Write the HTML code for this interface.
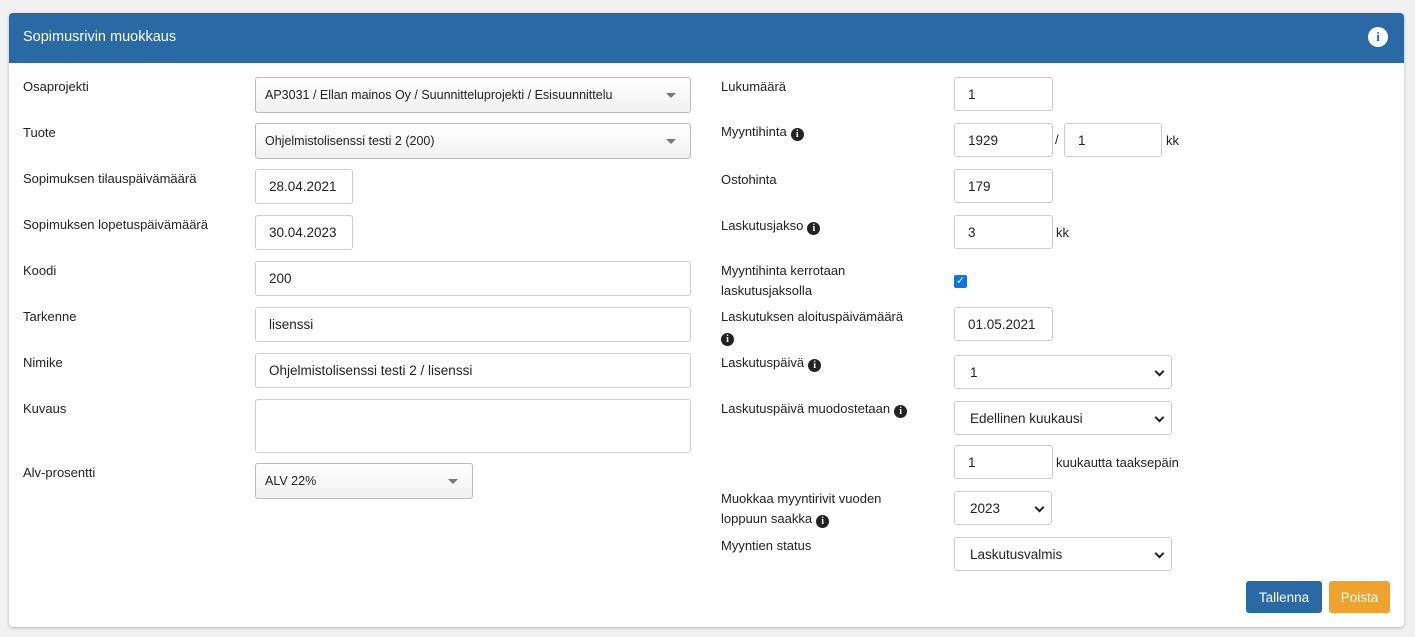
<!DOCTYPE html>
<html><head><meta charset="utf-8"><style>
*{box-sizing:border-box;margin:0;padding:0}
body{width:1415px;height:637px;background:#f1f1f1;font-family:"Liberation Sans",sans-serif;font-size:13px;color:#222;position:relative;overflow:hidden}
.panel{position:absolute;left:9px;top:13px;width:1395px;height:614px;background:#fff;border-radius:4px;box-shadow:0 1px 3px rgba(0,0,0,.25)}
.hdr{position:absolute;left:9px;top:13px;width:1395px;height:50px;background:#2a69a6;border-radius:4px 4px 0 0;color:#fff;font-size:14.5px;padding:16px 0 0 14px}
.ii{position:absolute;left:1368px;top:27px;width:20px;height:20px;border-radius:50%;background:#fff;color:#2a69a6;font:bold 13px "Liberation Serif",serif;text-align:center;line-height:20px}
.l{position:absolute;font-size:13px;line-height:20px}
.in{position:absolute;border:1px solid #ccc;border-radius:3px;background:#fff;padding-left:13px;font-size:13.5px;display:flex;align-items:center}
.sel2{background:linear-gradient(#fff,#f1f1f1);border-color:#bbb;padding-left:9px;font-size:12.5px}
.sel2:after{content:"";position:absolute;right:14px;top:15px;border:5px solid transparent;border-top:5px solid #777;border-bottom:0}
.sel{padding-left:15px}
.sel:after{content:"";position:absolute;right:8px;top:12px;width:5px;height:5px;border-right:2px solid #222;border-bottom:2px solid #222;transform:rotate(45deg)}
.i{display:inline-block;width:13px;height:13px;border-radius:50%;background:#222;color:#fff;font:bold 10px "Liberation Serif",serif;text-align:center;line-height:13px;vertical-align:-1px;margin-left:4px}
.btn{position:absolute;top:581px;height:32px;border-radius:3px;color:#fff;font-size:13.5px;display:flex;align-items:center;justify-content:center}
</style></head><body>
<div class="panel"></div>
<div class="hdr">Sopimusrivin muokkaus</div>
<div class="ii">i</div>

<div class="l" style="left:23px;top:77px">Osaprojekti</div>
<div class="in sel2" style="left:255px;top:77px;width:436px;height:36px">AP3031 / Ellan mainos Oy / Suunnitteluprojekti / Esisuunnittelu</div>
<div class="l" style="left:23px;top:123px">Tuote</div>
<div class="in sel2" style="left:255px;top:123px;width:436px;height:36px">Ohjelmistolisenssi testi 2 (200)</div>
<div class="l" style="left:23px;top:169px">Sopimuksen tilauspäivämäärä</div>
<div class="in" style="left:255px;top:169px;width:98px;height:35px">28.04.2021</div>
<div class="l" style="left:23px;top:215px">Sopimuksen lopetuspäivämäärä</div>
<div class="in" style="left:255px;top:215px;width:98px;height:35px">30.04.2023</div>
<div class="l" style="left:23px;top:261px">Koodi</div>
<div class="in" style="left:255px;top:261px;width:436px;height:35px">200</div>
<div class="l" style="left:23px;top:307px">Tarkenne</div>
<div class="in" style="left:255px;top:307px;width:436px;height:35px">lisenssi</div>
<div class="l" style="left:23px;top:353px">Nimike</div>
<div class="in" style="left:255px;top:353px;width:436px;height:35px">Ohjelmistolisenssi testi 2 / lisenssi</div>
<div class="l" style="left:23px;top:399px">Kuvaus</div>
<div class="in" style="left:255px;top:399px;width:436px;height:54px"></div>
<div class="l" style="left:23px;top:463px">Alv-prosentti</div>
<div class="in sel2" style="left:255px;top:463px;width:218px;height:36px">ALV 22%</div>

<div class="l" style="left:721px;top:77px">Lukumäärä</div>
<div class="in" style="left:954px;top:77px;width:99px;height:34px">1</div>
<div class="l" style="left:721px;top:122px">Myyntihinta<span class="i">i</span></div>
<div class="in" style="left:954px;top:123px;width:99px;height:34px">1929</div>
<div class="l" style="left:1055px;top:130px">/</div>
<div class="in" style="left:1064px;top:123px;width:98px;height:34px">1</div>
<div class="l" style="left:1166px;top:131px">kk</div>
<div class="l" style="left:721px;top:170px">Ostohinta</div>
<div class="in" style="left:954px;top:169px;width:99px;height:34px">179</div>
<div class="l" style="left:721px;top:216px">Laskutusjakso<span class="i">i</span></div>
<div class="in" style="left:954px;top:215px;width:99px;height:34px">3</div>
<div class="l" style="left:1056px;top:223px">kk</div>
<div class="l" style="left:721px;top:261px">Myyntihinta kerrotaan<br>laskutusjaksolla</div>
<div style="position:absolute;left:954px;top:275px;width:13px;height:13px;background:#0b75e8;border-radius:2px;color:#fff;font-size:11px;line-height:13px;text-align:center">✓</div>
<div class="l" style="left:721px;top:307px">Laskutuksen aloituspäivämäärä<br><span class="i" style="margin-left:0">i</span></div>
<div class="in" style="left:954px;top:307px;width:99px;height:34px">01.05.2021</div>
<div class="l" style="left:721px;top:353px">Laskutuspäivä<span class="i">i</span></div>
<div class="in sel" style="left:954px;top:355px;width:218px;height:34px">1</div>
<div class="l" style="left:721px;top:399px">Laskutuspäivä muodostetaan<span class="i">i</span></div>
<div class="in sel" style="left:954px;top:401px;width:218px;height:34px">Edellinen kuukausi</div>
<div class="in" style="left:954px;top:445px;width:99px;height:34px">1</div>
<div class="l" style="left:1056px;top:453px">kuukautta taaksepäin</div>
<div class="l" style="left:721px;top:489px">Muokkaa myyntirivit vuoden<br>loppuun saakka<span class="i">i</span></div>
<div class="in sel" style="left:954px;top:491px;width:98px;height:34px">2023</div>
<div class="l" style="left:721px;top:536px">Myyntien status</div>
<div class="in sel" style="left:954px;top:537px;width:218px;height:34px">Laskutusvalmis</div>

<div class="btn" style="left:1246px;width:76px;background:#2a69a6">Tallenna</div>
<div class="btn" style="left:1329px;width:61px;background:#f0a22e">Poista</div>
</body></html>
